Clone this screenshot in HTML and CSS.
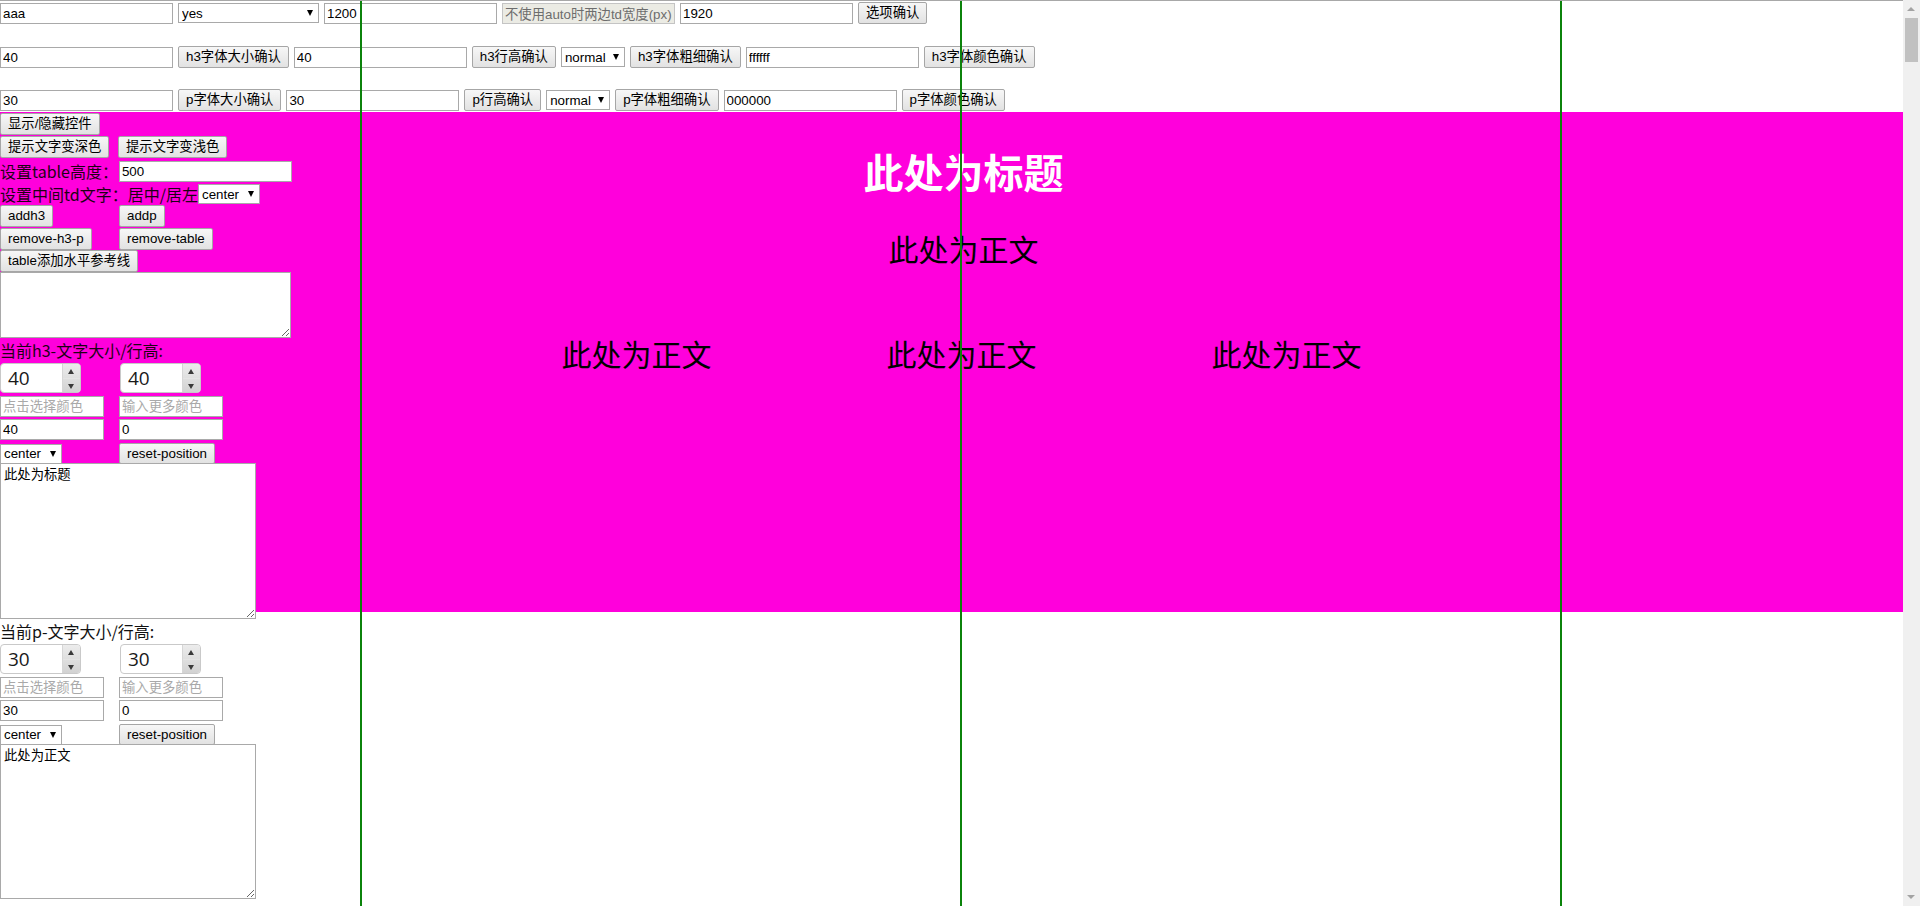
FILE: index.html
```html
<!DOCTYPE html>
<html lang="zh-CN">
<head>
<meta charset="utf-8">
<title>table 编辑器</title>
<link rel="stylesheet" href="styles.css">
</head>
<body>
<div class="page">
  <div class="options">
    <div class="opt-row row1">
      <input class="txt" value="aaa">
      <span class="sel sel-yes"><select><option>yes</option></select></span>
      <input class="txt" value="1200">
      <input class="txt hint" value="不使用auto时两边td宽度(px):" readonly>
      <input class="txt" value="1920">
      <button class="btn">选项确认</button>
    </div>
    <div class="opt-row row2">
      <input class="txt" value="40">
      <button class="btn">h3字体大小确认</button>
      <input class="txt" value="40">
      <button class="btn">h3行高确认</button>
      <span class="sel sel-normal"><select><option>normal</option></select></span>
      <button class="btn">h3字体粗细确认</button>
      <input class="txt" value="ffffff">
      <button class="btn">h3字体颜色确认</button>
    </div>
    <div class="opt-row row3">
      <input class="txt" value="30">
      <button class="btn">p字体大小确认</button>
      <input class="txt" value="30">
      <button class="btn">p行高确认</button>
      <span class="sel sel-normal"><select><option>normal</option></select></span>
      <button class="btn">p字体粗细确认</button>
      <input class="txt" value="000000">
      <button class="btn">p字体颜色确认</button>
    </div>
  </div>

  <div class="stage">
    <div class="table">
      <h3 class="title">此处为标题</h3>
      <p class="body-text">此处为正文</p>
      <div class="cols">
        <p class="body-text">此处为正文</p>
        <p class="body-text">此处为正文</p>
        <p class="body-text">此处为正文</p>
      </div>
    </div>

    <aside class="panel">
      <div class="pr pr-first"><button class="btn">显示/隐藏控件</button></div>
      <div class="pr pair">
        <button class="btn">提示文字变深色</button>
        <button class="btn">提示文字变浅色</button>
      </div>
      <div class="pr pr-label">
        <span class="lbl">设置table高度：</span><input class="txt" value="500">
      </div>
      <div class="pr pr-label2">
        <span class="lbl">设置中间td文字：居中/居左</span><span class="sel sel-center"><select><option>center</option></select></span>
      </div>
      <div class="pr pair pr-a">
        <button class="btn">addh3</button>
        <button class="btn">addp</button>
      </div>
      <div class="pr pair pr-a">
        <button class="btn">remove-h3-p</button>
        <button class="btn">remove-table</button>
      </div>
      <div class="pr"><button class="btn">table添加水平参考线</button></div>
      <textarea class="area area-top"></textarea>

      <section class="sec">
        <div class="sec-title">当前h3-文字大小/行高:</div>
        <div class="pair num-row">
          <span class="num"><input class="num-in" value="40"><span class="spin"><i class="s-up"></i><i class="s-down"></i></span></span>
          <span class="num"><input class="num-in" value="40"><span class="spin"><i class="s-up"></i><i class="s-down"></i></span></span>
        </div>
        <div class="pair c-row">
          <input class="txt sm" placeholder="点击选择颜色">
          <input class="txt sm" placeholder="输入更多颜色">
        </div>
        <div class="pair t-row">
          <input class="txt sm" value="40">
          <input class="txt sm" value="0">
        </div>
        <div class="pair s-row">
          <span class="sel sel-center"><select><option>center</option></select></span>
          <button class="btn btn-s">reset-position</button>
        </div>
        <textarea class="area area-sec">此处为标题</textarea>
      </section>

      <section class="sec">
        <div class="sec-title">当前p-文字大小/行高:</div>
        <div class="pair num-row">
          <span class="num"><input class="num-in" value="30"><span class="spin"><i class="s-up"></i><i class="s-down"></i></span></span>
          <span class="num"><input class="num-in" value="30"><span class="spin"><i class="s-up"></i><i class="s-down"></i></span></span>
        </div>
        <div class="pair c-row">
          <input class="txt sm" placeholder="点击选择颜色">
          <input class="txt sm" placeholder="输入更多颜色">
        </div>
        <div class="pair t-row">
          <input class="txt sm" value="30">
          <input class="txt sm" value="0">
        </div>
        <div class="pair s-row">
          <span class="sel sel-center"><select><option>center</option></select></span>
          <button class="btn btn-s">reset-position</button>
        </div>
        <textarea class="area area-sec2">此处为正文</textarea>
      </section>
    </aside>
  </div>
</div>

<div class="guide guide-l"></div>
<div class="guide guide-c"></div>
<div class="guide guide-r"></div>

<div class="scrollbar">
  <span class="sb-up"></span>
  <span class="sb-thumb"></span>
  <span class="sb-down"></span>
</div>
</body>
</html>
```

FILE: styles.css
```css
* { box-sizing: border-box; }

html, body {
  margin: 0;
  height: 100%;
  overflow: hidden;
}

body {
  border-top: 1px solid #a8a8a8;
  background: #fff;
  color: #000;
  font-family: "Liberation Sans", "Noto Sans CJK SC", sans-serif;
  font-size: 13.33px;
}

.page {
  margin-right: 17px;
  height: 100%;
  overflow: hidden;
}

/* ---------- form controls ---------- */
.txt {
  width: 173px;
  height: 21px;
  margin: 0;
  padding: 1px 2px;
  border: 1px solid #a9a9a9;
  border-radius: 0;
  background: #fff;
  color: #000;
  font: 13.33px "Liberation Sans", "Noto Sans CJK SC", sans-serif;
  outline: none;
}
.txt.hint {
  background: #ebebe4;
  border-color: #c4c4c4;
  color: #6d6d6d;
}
.txt.sm { width: 104px; }
.txt::placeholder { color: #a9a9a9; }

.btn {
  height: 22px;
  margin: 0;
  padding: 0 7px;
  border: 1px solid #a6a6a6;
  border-radius: 2px;
  background: linear-gradient(#f7f7f7, #e2e2e2);
  color: #000;
  font: 13.33px/20px "Liberation Sans", "Noto Sans CJK SC", sans-serif;
  white-space: nowrap;
}

.sel {
  position: relative;
  display: inline-block;
  height: 20px;
}
.sel select {
  -webkit-appearance: none;
  appearance: none;
  width: 100%;
  height: 100%;
  margin: 0;
  padding: 0 14px 0 3px;
  border: 1px solid #a9a9a9;
  border-radius: 0;
  background: #fff;
  color: #000;
  font: 13.33px "Liberation Sans", "Noto Sans CJK SC", sans-serif;
}
.sel::after {
  content: "";
  position: absolute;
  right: 6px;
  top: 7px;
  border-left: 3.5px solid transparent;
  border-right: 3.5px solid transparent;
  border-top: 6px solid #000;
  pointer-events: none;
}
.sel-yes { width: 141px; }
.sel-normal { width: 64px; }
.sel-center { width: 62px; }

/* ---------- top option rows ---------- */
.options { padding-top: 1px; }
.opt-row {
  display: flex;
  align-items: center;
  gap: 5px;
  height: 22px;
}
.row2 { margin-top: 22px; }
.row3 { margin-top: 21px; }

/* ---------- stage / table ---------- */
.stage {
  position: relative;
  margin-top: 1px;
}
.table {
  width: 1920px;
  height: 500px;
  padding-left: 7px;
  background: #ff00dc;
  display: flex;
  flex-direction: column;
  align-items: center;
  font-family: "Noto Sans CJK SC", sans-serif;
}
.title {
  margin: 39px 0 0;
  color: #fff;
  font-size: 40px;
  line-height: 40px;
  font-weight: 700;
}
.body-text {
  margin: 0;
  color: #000;
  font-size: 30px;
  line-height: 30px;
  font-weight: 400;
  white-space: nowrap;
}
.table > .body-text { margin-top: 42px; }
.cols {
  display: flex;
  gap: 175px;
  margin: 75px 4px 0 0;
}

/* ---------- left control panel (floats over the table) ---------- */
.panel {
  position: absolute;
  top: 0;
  left: 0;
  width: 292px;
  display: flex;
  flex-direction: column;
  align-items: flex-start;
}
.pr {
  display: flex;
  align-items: center;
  height: 22px;
}
.pr-first { margin-top: 1px; }
.pair {
  display: grid;
  grid-template-columns: 119px auto;
  align-items: center;
  justify-items: start;
}
.panel > .pair:nth-child(2) { margin-top: 1px; grid-template-columns: 118px auto; }
.pr-label { margin-top: 2px; }
.pr-label .txt { margin-left: 1px; }
.pr-label2 { margin-top: 2px; height: 20px; }
.pr-a { margin-top: 1px; }

.lbl {
  font-family: "Noto Sans CJK SC", sans-serif;
  font-size: 16px;
  line-height: 22px;
  color: #1e0014;
  white-space: nowrap;
}

.area {
  display: block;
  margin: 0;
  padding: 2px 3px;
  border: 1px solid #a9a9a9;
  background: #fff;
  color: #000;
  font: 13.33px/16px "Noto Sans CJK SC", sans-serif;
  outline: none;
}
.area-top { width: 291px; height: 66px; }
.area-sec { width: 256px; height: 156px; }
.area-sec2 { width: 256px; height: 155px; }

.sec { display: flex; flex-direction: column; align-items: flex-start; }
.sec-title {
  height: 25px;
  padding-top: 1px;
  font-family: "Noto Sans CJK SC", sans-serif;
  font-size: 16px;
  line-height: 22px;
  color: #1e0014;
  white-space: nowrap;
}
.sec + .sec .sec-title { color: #111; }

.num-row { grid-template-columns: 120px auto; height: 30px; }
.c-row { margin-top: 3px; }
.t-row { margin-top: 2px; }
.s-row { margin-top: 3px; height: 20px; }
.btn-s { height: 21px; line-height: 19px; }

.num {
  display: inline-flex;
  width: 81px;
  height: 30px;
  border: 1px solid #c9c9c9;
  border-radius: 4px;
  background: #fff;
  overflow: hidden;
}
.num-in {
  flex: 1;
  min-width: 0;
  margin: 0;
  padding: 0 0 0 7px;
  border: 0;
  background: transparent;
  color: #1a1a1a;
  font: 19px "Open Sans", "Liberation Sans", sans-serif;
  outline: none;
}
.spin {
  width: 18px;
  display: flex;
  flex-direction: column;
  background: linear-gradient(#ececec, #d2d2d2);
  border-left: 1px solid #d6d6d6;
}
.spin i {
  flex: 1;
  position: relative;
}
.s-down { border-top: 1px solid #e4e4e4; }
.s-up::after,
.s-down::after {
  content: "";
  position: absolute;
  left: 5px;
  border-left: 3.5px solid transparent;
  border-right: 3.5px solid transparent;
}
.s-up::after { top: 5px; border-bottom: 5px solid #3a3a3a; }
.s-down::after { top: 5px; border-top: 5px solid #3a3a3a; }

/* ---------- vertical reference guides (overlay) ---------- */
.guide {
  position: fixed;
  top: 1px;
  bottom: 0;
  width: 2px;
  background: #0b830b;
  z-index: 5;
}
.guide-l { left: 360px; }
.guide-c { left: 960px; }
.guide-r { left: 1560px; }

/* ---------- window scrollbar ---------- */
.scrollbar {
  position: fixed;
  top: 0;
  right: 0;
  width: 17px;
  height: 100%;
  background: #f0f0f0;
  z-index: 6;
}
.sb-thumb {
  position: absolute;
  left: 2px;
  top: 18px;
  width: 13px;
  height: 44px;
  background: #c1c1c1;
}
.sb-up,
.sb-down {
  position: absolute;
  left: 4px;
  border-left: 4px solid transparent;
  border-right: 4px solid transparent;
}
.sb-up { top: 7px; border-bottom: 4px solid #a3a3a3; }
.sb-down { bottom: 7px; border-top: 4px solid #a3a3a3; }
```
